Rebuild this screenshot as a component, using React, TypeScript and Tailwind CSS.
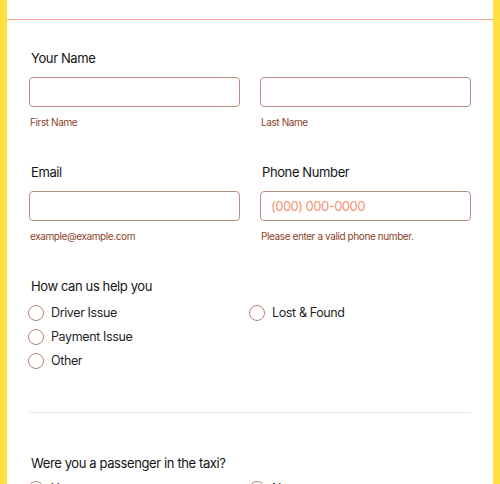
import React from "react";

const font = { fontFamily: "Inter, 'Noto Sans', sans-serif" };

function Label({ children }: { children: React.ReactNode }) {
  return <div className="pl-[2px] text-[13px] leading-[20px] tracking-[-0.03em] text-[#141414] mb-[9px]">{children}</div>;
}

function Field({ helper, placeholder }: { helper: string; placeholder?: string }) {
  return (
    <div className="flex flex-col">
      <input
        placeholder={placeholder}
        className="h-[30px] w-full rounded-[4px] border border-[#b98e82] bg-white px-[10px] text-[13px] tracking-[-0.04em] outline-none placeholder:text-[#f4926e]"
      />
      <div className="mt-[8px] pl-[1px] text-[10px] leading-[14px] tracking-[-0.04em] text-[#8a3f28]">{helper}</div>
    </div>
  );
}

function Radio({ label }: { label: string }) {
  return (
    <label className="-ml-[1px] flex h-[24px] items-center gap-[7px]">
      <span className="h-[16px] w-[16px] shrink-0 rounded-full border border-[#b98274] bg-white" />
      <span className="text-[12.5px] tracking-[-0.03em] text-[#1f1f1f]">{label}</span>
    </label>
  );
}

export default function App() {
  return (
    <div className="h-screen overflow-hidden bg-[#ffe040] px-[7px]" style={font}>
      <div className="h-full bg-white">
        <div className="h-[20px] border-b border-[#f6a586]" />
        <div className="px-[22px] pt-[28px]">
          <Label>Your Name</Label>
          <div className="grid grid-cols-2 gap-[20px]">
            <Field helper="First Name" />
            <Field helper="Last Name" />
          </div>

          <div className="mt-[33px] grid grid-cols-2 gap-[20px]">
            <div>
              <Label>Email</Label>
              <Field helper="example@example.com" />
            </div>
            <div>
              <Label>Phone Number</Label>
              <Field helper="Please enter a valid phone number." placeholder="(000) 000-0000" />
            </div>
          </div>

          <div className="mt-[33px] pl-[2px] text-[13px] leading-[20px] tracking-[-0.03em] text-[#141414]">How can us help you</div>
          <div className="mt-[5px] grid grid-cols-2">
            <div className="flex flex-col">
              <Radio label="Driver Issue" />
              <Radio label="Payment Issue" />
              <Radio label="Other" />
            </div>
            <div className="flex flex-col">
              <Radio label="Lost & Found" />
            </div>
          </div>

          <div className="mt-[39px] border-t border-[#e8e8e8]" />

          <div className="mt-[40px] pl-[2px] text-[13px] leading-[20px] tracking-[-0.03em] text-[#141414]">Were you a passenger in the taxi?</div>
          <div className="mt-[4px] grid grid-cols-2 pb-[40px]">
            <Radio label="Yes" />
            <Radio label="No" />
          </div>
        </div>
      </div>
    </div>
  );
}
